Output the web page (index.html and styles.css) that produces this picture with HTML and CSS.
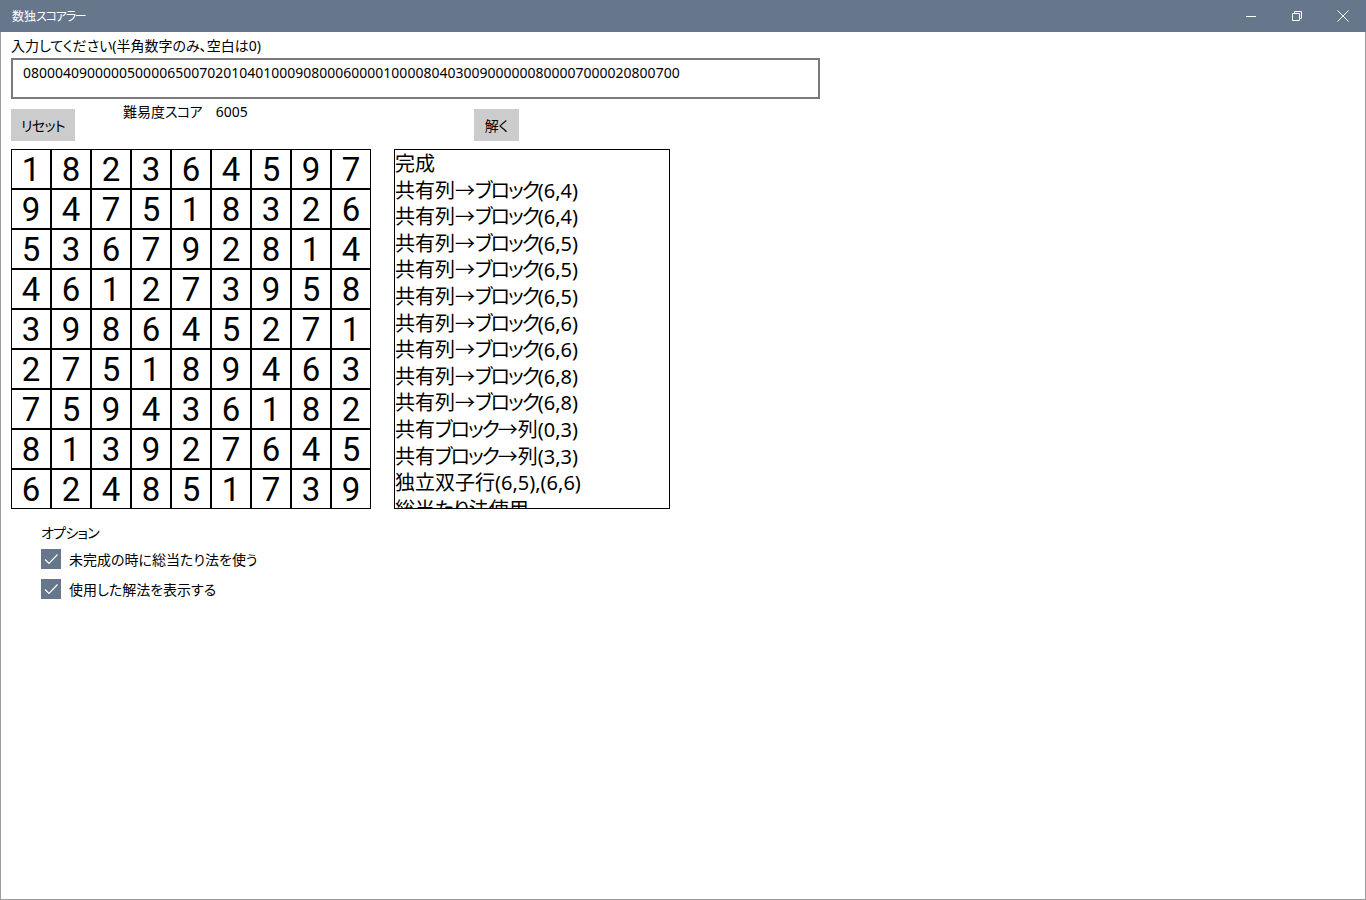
FILE: index.html
```html
<!DOCTYPE html>
<html lang="ja">
<head>
<meta charset="utf-8">
<title>数独スコアラー</title>
<link rel="stylesheet" href="styles.css">
</head>
<body>
<div class="window">
  <div class="titlebar">
    <div class="title">数独<span class="k">スコアラー</span></div>
    <div class="controls">
      <div class="ctl"><svg width="12" height="12" viewBox="0 0 12 12"><path d="M1 6.5H11" stroke="#fff" stroke-width="1" fill="none"/></svg></div>
      <div class="ctl"><svg width="12" height="12" viewBox="0 0 12 12"><path d="M1.5 3.5H8.5V10.5H1.5Z M3.5 3.5V1.5H10.5V8.5H8.5" stroke="#fff" stroke-width="1" fill="none"/></svg></div>
      <div class="ctl"><svg width="12" height="12" viewBox="0 0 12 12"><path d="M0.5 0.5L11.5 11.5M11.5 0.5L0.5 11.5" stroke="#fff" stroke-width="1" fill="none"/></svg></div>
    </div>
  </div>
  <div class="content">
    <div class="prompt">入力してください(半角数字のみ、空白は0)</div>
    <div class="textbox">0800040900000500006500702010401000908000600001000080403009000000800007000020800700</div>
    <div class="buttons">
      <div class="btn reset"><span class="k2">リセット</span></div>
      <div class="score">難易度<span class="k2">スコア</span>　6005</div>
      <div class="btn solve">解く</div>
    </div>
    <div class="main">
      <div class="grid" id="grid"></div>
      <div class="list">
        <div>完成</div>
        <div>共有列→<span class="k">ブロック</span>(6,4)</div>
        <div>共有列→<span class="k">ブロック</span>(6,4)</div>
        <div>共有列→<span class="k">ブロック</span>(6,5)</div>
        <div>共有列→<span class="k">ブロック</span>(6,5)</div>
        <div>共有列→<span class="k">ブロック</span>(6,5)</div>
        <div>共有列→<span class="k">ブロック</span>(6,6)</div>
        <div>共有列→<span class="k">ブロック</span>(6,6)</div>
        <div>共有列→<span class="k">ブロック</span>(6,8)</div>
        <div>共有列→<span class="k">ブロック</span>(6,8)</div>
        <div>共有<span class="k">ブロック</span>→列(0,3)</div>
        <div>共有<span class="k">ブロック</span>→列(3,3)</div>
        <div>独立双子行(6,5),(6,6)</div>
        <div>総当<span class="k2">たり</span>法使用</div>
      </div>
    </div>
    <div class="options">
      <div class="opt-title"><span class="k2">オプション</span></div>
      <div class="check"><span class="box"><svg width="20" height="20" viewBox="0 0 20 20"><path d="M4 10.5L8 14.5L16.5 5.5" stroke="#fff" stroke-width="1.2" fill="none"/></svg></span>未完成の時に総当たり法を使う</div>
      <div class="check"><span class="box"><svg width="20" height="20" viewBox="0 0 20 20"><path d="M4 10.5L8 14.5L16.5 5.5" stroke="#fff" stroke-width="1.2" fill="none"/></svg></span>使用した解法を表示する</div>
    </div>
  </div>
</div>
<script src="app.js"></script>
</body>
</html>
```
FILE: app.js
```js
var digits = "182364597947518326536792814461273958398645271275189463759436182813927645624851739";
var g = document.getElementById("grid");
for (var i = 0; i < digits.length; i++) {
  var c = document.createElement("div");
  c.className = "cell";
  c.textContent = digits[i];
  g.appendChild(c);
}
```
FILE: styles.css
```css
* { box-sizing: border-box; }
html, body { margin: 0; padding: 0; background: #fff; }
body {
  font-family: "Noto Sans", "Noto Sans CJK JP", sans-serif;
  font-feature-settings: "palt";
  color: #000;
  width: 1366px;
  height: 900px;
  overflow: hidden;
}
.k { letter-spacing: -0.1em; }
.k2 { letter-spacing: -0.05em; }
.window {
  width: 1366px;
  height: 900px;
  border-left: 1px solid #9c9c9c;
  border-right: 1px solid #9c9c9c;
  border-bottom: 1px solid #9c9c9c;
  display: flex;
  flex-direction: column;
}
.titlebar {
  height: 32px;
  margin: 0 -1px;
  background: #66768b;
  display: flex;
  align-items: center;
  justify-content: space-between;
  color: #fff;
  flex: none;
}
.title {
  font-family: "Noto Sans CJK JP", sans-serif;
  font-size: 12px;
  padding-left: 12px;
  padding-bottom: 1px;
}
.controls { display: flex; height: 32px; }
.ctl {
  width: 46px;
  height: 32px;
  display: flex;
  align-items: center;
  justify-content: center;
}
.content {
  padding: 4px 0 0 10px;
  font-family: "Noto Sans", "Noto Sans CJK JP", sans-serif;
}
.prompt {
  font-size: 14px;
  line-height: 20px;
  height: 22px;
}
.textbox {
  width: 809px;
  height: 41px;
  border: 2px solid #7a7a7a;
  font-size: 14px;
  line-height: 20px;
  padding: 3px 0 0 10px;
  white-space: nowrap;
  overflow: hidden;
}
.buttons {
  display: flex;
  align-items: flex-start;
  margin-top: 10px;
  height: 32px;
}
.btn {
  background: #cccccc;
  height: 32px;
  font-size: 14px;
  display: flex;
  align-items: center;
  justify-content: center;
}
.reset { width: 64px; }
.score {
  font-size: 14px;
  line-height: 20px;
  margin-left: 48px;
  margin-top: -7px;
  width: 351px;
}
.solve { width: 45px; }
.main {
  display: flex;
  margin-top: 8px;
  gap: 23px;
}
.grid {
  display: grid;
  grid-template-columns: repeat(9, 40px);
  grid-template-rows: repeat(9, 40px);
}
.cell {
  border: 1px solid #000;
  font-family: Roboto, "Noto Sans", sans-serif;
  font-size: 33px;
  display: flex;
  align-items: center;
  justify-content: center;
  line-height: 37px;
  padding-top: 1px;
}
.list {
  width: 276px;
  height: 360px;
  border: 1px solid #000;
  overflow: hidden;
  padding: 1px 0 0 0;
  font-size: 20px;
  line-height: 26.6px;
  white-space: nowrap;
}
.options {
  margin-left: 30px;
  margin-top: 14px;
}
.opt-title {
  font-size: 14px;
  line-height: 20px;
  height: 26px;
}
.check {
  display: flex;
  align-items: center;
  font-size: 14px;
  height: 20px;
  margin-bottom: 10px;
}
.box {
  width: 20px;
  height: 20px;
  background: #66768b;
  margin-right: 8px;
  display: block;
  flex: none;
}
.box svg { display: block; }
```
